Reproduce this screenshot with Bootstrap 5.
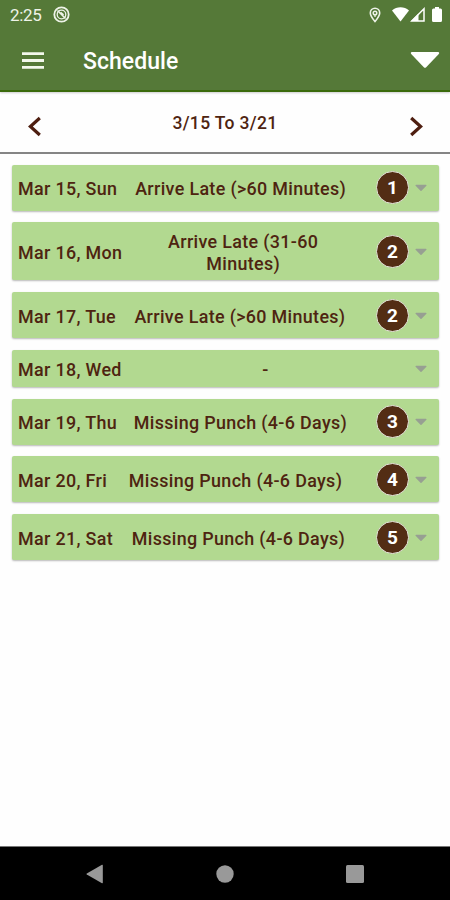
<!DOCTYPE html>
<html lang="en">
<head>
<meta charset="utf-8">
<meta name="viewport" content="width=device-width, initial-scale=1">
<title>Schedule</title>
<link href="https://cdn.jsdelivr.net/npm/bootstrap@5.3.0/dist/css/bootstrap.min.css" rel="stylesheet">
<style>
body{font-family:Roboto,"Noto Sans",sans-serif;height:900px;background:#fefefe;color:#4e2410;overflow:hidden}
svg{display:block;flex:none}
.app-head{background:#557938;height:92px;border-bottom:2px solid #3a6a0c;box-shadow:0 1px 2px rgba(0,0,0,.2)}
.status{height:29px;padding:0 8px 0 10px;font-size:17px;line-height:29px;letter-spacing:-.3px;color:#eef3e8}
.clock{padding-top:1px}
.ic-app{margin-left:11px}
.ic-wifi{margin-left:11px}
.ic-cell{margin-left:1px}
.ic-batt{margin-left:7px}
.titlebar{height:61px;padding:1px 10px 0 22px}
.page-title{font-size:23px;font-weight:500;line-height:30px;margin-left:39px;padding-top:3px;letter-spacing:.05px}
.week{height:62px;border-bottom:2px solid #858585;padding:0 27px}
.week-label{font-size:17.5px;font-weight:500;line-height:24px;margin-top:19px;letter-spacing:.35px}
.week svg{margin-top:24px}
.days{padding:10.5px 11px 0 12px;gap:11.95px}
.day{background:#b2d990;border-radius:2px;box-shadow:0 1px 2px rgba(0,0,0,.28);padding:7px 12px 6px 6px;font-size:17.9px;font-weight:500;line-height:21.7px;letter-spacing:.34px}
.date,.note{padding-top:1.6px}
.note{padding-left:6px;padding-right:6px}
.count{width:33px;height:33px;margin:-.5px 0 .5px 12px;border:1px solid #e6e6dc;background:#532d14;color:#fff;font-size:19px;font-weight:700;letter-spacing:0;padding-top:1px}
.day .caret{margin-left:6px}
.sysbar{height:54px;background:#000;border-top:1px solid #777;padding:0 86px}
</style>
<script src="https://cdn.jsdelivr.net/npm/bootstrap@5.3.0/dist/js/bootstrap.bundle.min.js"></script>
</head>
<body class="d-flex flex-column">
<svg width="0" height="0" class="position-absolute"><defs>
<symbol id="caret" viewBox="0 0 12 8"><path d="M1 .8h10a.6.6 0 0 1 .4 1L6.5 6.8a.7.7 0 0 1-1 0L.6 1.8A.6.6 0 0 1 1 .8z" fill="#979f92"/></symbol>
</defs></svg>
<header class="app-head text-white flex-shrink-0">
  <div class="status d-flex align-items-center">
    <span class="clock">2:25</span>
    <svg class="ic-app" width="17" height="17" viewBox="0 0 17 17" fill="none" stroke="#eef3e8"><circle cx="8.5" cy="8.5" r="7.2" stroke-width="1.8"/><circle cx="8.5" cy="8.5" r="4.3" stroke-width="1.3"/><path d="M4.500 4.500l8 8M7.500 6.500l3 2.500" stroke-width="1.700"/></svg>
    <svg class="ms-auto" width="12" height="16" viewBox="0 0 12 16" fill="none" stroke="#eef3e8"><path d="M6 14.600C3 11 1.300 8.500 1.300 6a4.700 4.700 0 0 1 9.400 0C10.700 8.500 9 11 6 14.600z" stroke-width="1.600"/><path d="M6 10V8" stroke-width="1.300"/><circle cx="6" cy="6" r="1.800" stroke-width="1.500"/></svg>
    <svg class="ic-wifi" width="17" height="15" viewBox="0 0 17 15"><path d="M0 3.400C2.500 1.300 5.300.2 8.500.2s6 1.100 8.500 3.200L8.500 14.500z" fill="#fff"/></svg>
    <svg class="ic-cell" width="15" height="15" viewBox="0 0 15 15"><path d="M1.800 14L14 1.800V14z" fill="none" stroke="#fff" stroke-width="1.500"/><path d="M1 14L8.500 6.500V14z" fill="#fff"/></svg>
    <svg class="ic-batt" width="10" height="15" viewBox="0 0 10 15"><path d="M3 0h4v1.400h1.500Q10 1.400 10 3v10.500q0 1.500-1.500 1.500h-7Q0 15 0 13.500V3q0-1.600 1.500-1.600H3z" fill="#fff"/></svg>
  </div>
  <div class="titlebar d-flex align-items-center">
    <svg width="22" height="17" viewBox="0 0 22 17"><path d="M0 1.700h22M0 8.500h22M0 15.300h22" stroke="#f3f8ec" stroke-width="2.800"/></svg>
    <h1 class="page-title mb-0">Schedule</h1>
    <svg class="ms-auto" width="30" height="18" viewBox="0 0 30 18"><path d="M2 1h26q2 .3.800 2L16.200 16.200q-1.200 1.200-2.400 0L1.200 3Q0 1.300 2 1z" fill="#fff"/></svg>
  </div>
</header>
<div class="week d-flex justify-content-between align-items-start flex-shrink-0">
  <svg width="15" height="21" viewBox="0 0 15 21"><path d="M12.800 2L3.400 10.500l9.400 8.500" fill="none" stroke="#4e1e10" stroke-width="3.200"/></svg>
  <div class="week-label">3/15 To 3/21</div>
  <svg width="15" height="21" viewBox="0 0 15 21"><path d="M3.200 2l9.400 8.500L3.200 19" fill="none" stroke="#4e1e10" stroke-width="3.200"/></svg>
</div>
<main class="days d-flex flex-column flex-grow-1">
  <div class="day d-flex align-items-center"><span class="date">Mar 15, Sun</span><span class="note flex-fill text-center">Arrive Late (&gt;60 Minutes)</span><span class="count rounded-circle d-flex align-items-center justify-content-center flex-shrink-0">1</span><svg class="caret" width="12" height="8"><use href="#caret"/></svg></div>
  <div class="day d-flex align-items-center"><span class="date">Mar 16, Mon</span><span class="note flex-fill text-center">Arrive Late (31-60<br>Minutes)</span><span class="count rounded-circle d-flex align-items-center justify-content-center flex-shrink-0">2</span><svg class="caret" width="12" height="8"><use href="#caret"/></svg></div>
  <div class="day d-flex align-items-center"><span class="date">Mar 17, Tue</span><span class="note flex-fill text-center">Arrive Late (&gt;60 Minutes)</span><span class="count rounded-circle d-flex align-items-center justify-content-center flex-shrink-0">2</span><svg class="caret" width="12" height="8"><use href="#caret"/></svg></div>
  <div class="day d-flex align-items-center"><span class="date">Mar 18, Wed</span><span class="note flex-fill text-center">-</span><svg class="caret" width="12" height="8"><use href="#caret"/></svg></div>
  <div class="day d-flex align-items-center"><span class="date">Mar 19, Thu</span><span class="note flex-fill text-center">Missing Punch (4-6 Days)</span><span class="count rounded-circle d-flex align-items-center justify-content-center flex-shrink-0">3</span><svg class="caret" width="12" height="8"><use href="#caret"/></svg></div>
  <div class="day d-flex align-items-center"><span class="date">Mar 20, Fri</span><span class="note flex-fill text-center">Missing Punch (4-6 Days)</span><span class="count rounded-circle d-flex align-items-center justify-content-center flex-shrink-0">4</span><svg class="caret" width="12" height="8"><use href="#caret"/></svg></div>
  <div class="day d-flex align-items-center"><span class="date">Mar 21, Sat</span><span class="note flex-fill text-center">Missing Punch (4-6 Days)</span><span class="count rounded-circle d-flex align-items-center justify-content-center flex-shrink-0">5</span><svg class="caret" width="12" height="8"><use href="#caret"/></svg></div>
</main>
<footer class="sysbar d-flex justify-content-between align-items-center flex-shrink-0">
  <svg width="17" height="20" viewBox="0 0 17 20"><path d="M16 .8q.800-.3.800.6v17.200q0 .9-.8.6L.8 10.600Q0 10 .8 9.400z" fill="#999"/></svg>
  <svg width="18" height="18" viewBox="0 0 18 18"><circle cx="9" cy="9" r="8.700" fill="#999"/></svg>
  <svg width="18" height="18" viewBox="0 0 18 18"><rect width="18" height="18" rx="1.500" fill="#999"/></svg>
</footer>
</body>
</html>
